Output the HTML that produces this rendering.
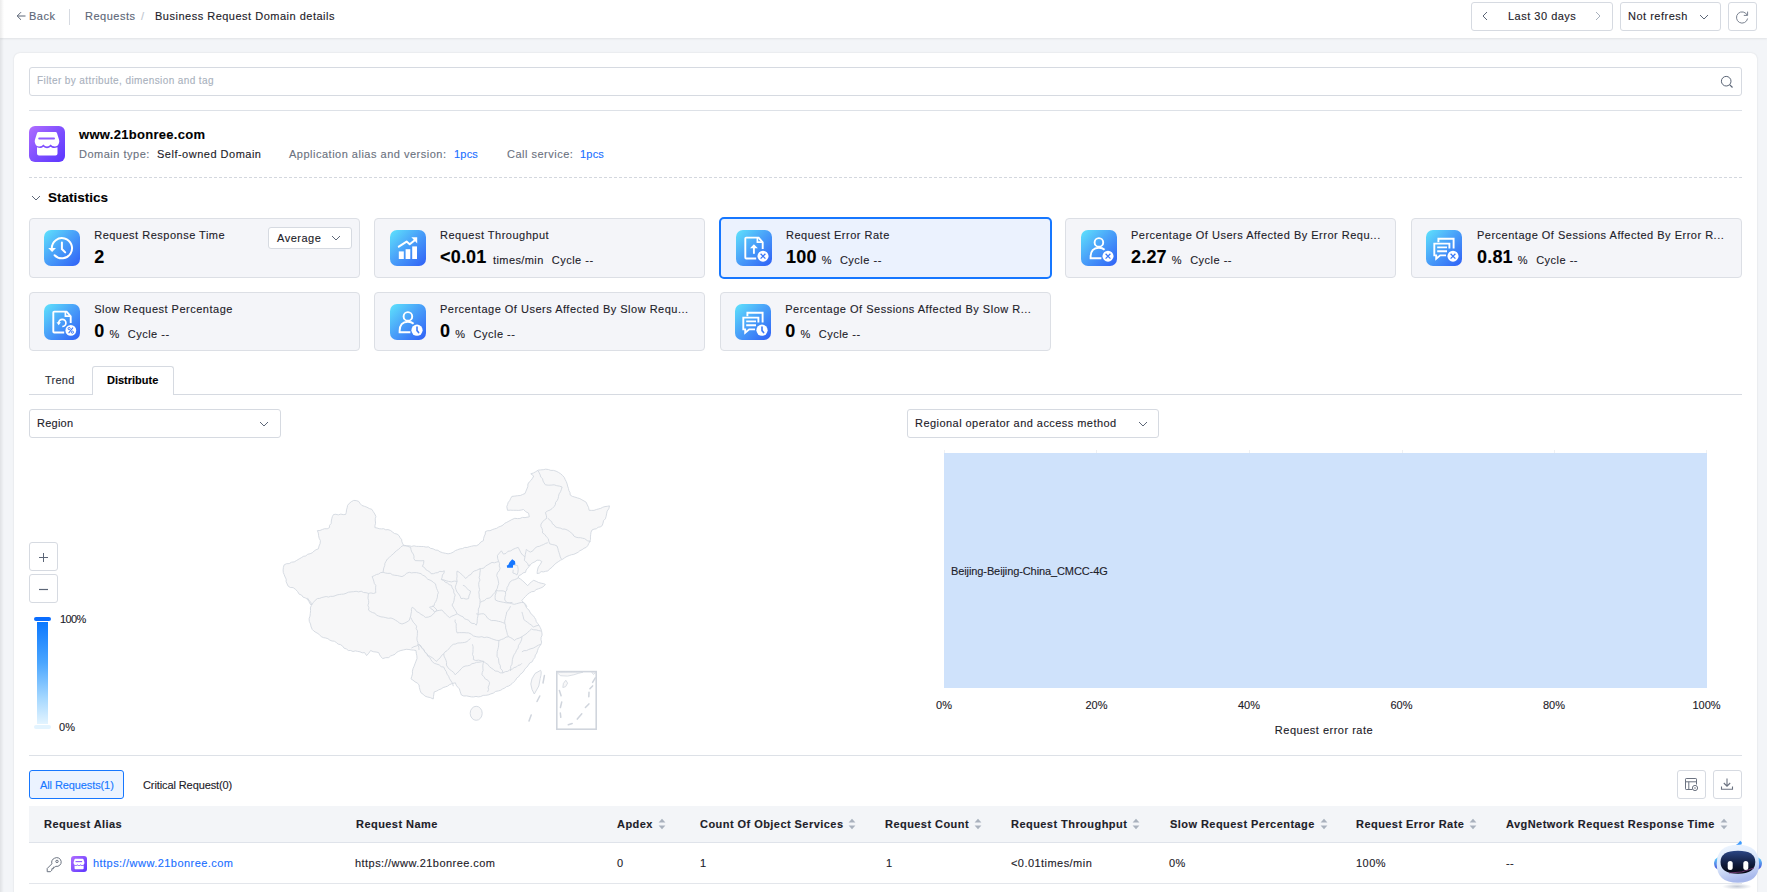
<!DOCTYPE html>
<html><head><meta charset="utf-8">
<style>
*{box-sizing:border-box;margin:0;padding:0}
html,body{width:1767px;height:892px;overflow:hidden}
body{background:#f3f5f8;font-family:"Liberation Sans",sans-serif;font-size:11px;color:#1d2129;position:relative}
.a{position:absolute}
.t{position:absolute;white-space:nowrap;line-height:1;letter-spacing:.5px;-webkit-text-stroke:.12px currentColor}
.vrow,.th{-webkit-text-stroke:.12px currentColor}
.hdr{left:0;top:0;width:1767px;height:38px;background:#fff;box-shadow:0 1px 2px rgba(0,0,0,.08)}
.lsh{left:0;top:0;width:4px;height:892px;background:linear-gradient(to right,rgba(0,0,0,.08),rgba(0,0,0,0));z-index:50}
.box{position:absolute;border:1px solid #d6dae1;border-radius:3px;background:#fff}
.card{left:14px;top:53px;width:1743px;height:900px;background:#fff;border-radius:6px;box-shadow:0 0 2px rgba(0,0,0,.12)}
.sc{position:absolute;width:331px;height:59px;background:#f4f5f9;border:1px solid #dcdfe5;border-radius:4px}
.sc.sel{background:#ebf2fe;border:2px solid #1677ff;width:333px;border-radius:5px}
.ic{position:absolute;left:14px;top:11px;width:36px;height:36px;border-radius:7px;background:linear-gradient(135deg,#5fe3fc 0%,#4aa3f9 45%,#2f5ff6 100%)}
.ic svg{position:absolute;left:0;top:0}
.st{left:64.2px;top:11px;color:#1d2129}
.o1 .ic{left:15px}.o5 .ic{left:14px}.o1 .st,.o1 .vrow{left:65px}
.vrow{position:absolute;left:64.2px;top:29px;white-space:nowrap;line-height:1}
.sv{font-size:18px;font-weight:bold;color:#000;letter-spacing:.2px}
.su{font-size:11px;color:#1d2129;letter-spacing:.5px;position:relative;top:.6px}
.chev{position:absolute}
.th{font-weight:bold;color:#1d2129;letter-spacing:.45px}
</style></head><body>

<svg width="0" height="0" style="position:absolute">
<defs>
  <g id="b-x"><circle cx="27" cy="26.2" r="5.5" fill="#fff"/><path d="M24.6 23.8L29.4 28.6M29.4 23.8L24.6 28.6" stroke="#3d7af8" stroke-width="1.3"/></g>
  <g id="b-clk"><circle cx="27" cy="26.2" r="5.6" fill="#fff"/><path d="M27 23V26.6L28.6 28.6" fill="none" stroke="#3d7af8" stroke-width="1.6" stroke-linecap="round"/></g>
  <g id="b-pct"><circle cx="26.8" cy="26.4" r="5.4" fill="#fff"/><path d="M29 23.6L24.6 29.2" stroke="#3d7af8" stroke-width="1.1"/><circle cx="25.2" cy="24.6" r="1.1" fill="none" stroke="#3d7af8" stroke-width="1"/><circle cx="28.4" cy="28.2" r="1.1" fill="none" stroke="#3d7af8" stroke-width="1"/></g>
  <g id="i-hist" fill="none" stroke="#fff" stroke-width="2" stroke-linecap="round"><path d="M7.8 18.2A10.1 10.1 0 1 1 10.6 25.2"/><path d="M17.9 12.6V19L21.2 22.4"/><path d="M4.2 17.9H12L8.1 22Z" fill="#fff" stroke="none"/></g>
  <g id="i-chart" fill="#fff"><rect x="8.8" y="21.4" width="5" height="7.6"/><rect x="15.6" y="19.2" width="4.7" height="9.8"/><rect x="22.2" y="16.4" width="4.8" height="12.6"/><path d="M8.8 16.6L16.6 11.6L19.7 14.2L26 9.2" fill="none" stroke="#fff" stroke-width="2" stroke-linecap="round" stroke-linejoin="round"/><path d="M21.4 7.3H27.2V13.4Z" /></g>
  <g id="i-doc" fill="none" stroke="#fff" stroke-width="1.9"><path d="M20.2 28.5H10.2Q9.3 28.5 9.3 27.6V8.5Q9.3 7.6 10.2 7.6H22.6L26.7 12.3V18.9"/><path d="M21.4 7.8V12.2H26.4" stroke-width="1.7"/></g>
  <g id="i-user" fill="none" stroke="#fff" stroke-width="1.9"><circle cx="17.9" cy="12.4" r="4.3"/><path d="M23.6 19.8Q21.4 17.8 17.9 17.8Q9.6 17.8 9.6 27V28.2H20.4"/></g>
  <g id="i-chat" fill="none" stroke="#fff" stroke-width="1.9"><path d="M12.4 12.2V8.8H27.6V18.6"/><path d="M20 25.4H14.2L10.2 28.8V25.4H8.3V13.6H23.4V18.6"/><path d="M11.2 17.4H21M11.2 21.2H21"/></g>
</defs></svg>
<div class="a lsh"></div>
<div class="a hdr">
  <svg class="a" style="left:16px;top:11px" width="10" height="10" viewBox="0 0 10 10"><path d="M9.5 5H1.2M5 1.2L1.2 5L5 8.8" fill="none" stroke="#5c6677" stroke-width="1"/></svg>
  <div class="t" style="left:29px;top:11px;color:#5c6677">Back</div>
  <div class="a" style="left:69px;top:9px;width:1px;height:16px;background:#d6dae1"></div>
  <div class="t" style="left:85px;top:11px;color:#5c6677">Requests</div>
  <div class="t" style="left:141px;top:11px;color:#c0c6d0">/</div>
  <div class="t" style="left:155px;top:11px;color:#1d2129">Business Request Domain details</div>
  <div class="box" style="left:1471px;top:2px;width:142px;height:29px"></div>
  <svg class="a" style="left:1481px;top:11px" width="8" height="10" viewBox="0 0 8 10"><path d="M6 1L2 5l4 4" fill="none" stroke="#5c6677" stroke-width="1"/></svg>
  <div class="t" style="left:1508px;top:11px">Last 30 days</div>
  <svg class="a" style="left:1594px;top:11px" width="8" height="10" viewBox="0 0 8 10"><path d="M2 1l4 4-4 4" fill="none" stroke="#a9b1bd" stroke-width="1"/></svg>
  <div class="box" style="left:1620px;top:2px;width:101px;height:29px"></div>
  <div class="t" style="left:1628px;top:11px">Not refresh</div>
  <svg class="a" style="left:1699px;top:13px" width="10" height="8" viewBox="0 0 10 8"><path d="M1 2l4 4 4-4" fill="none" stroke="#5c6677" stroke-width="1"/></svg>
  <div class="box" style="left:1728px;top:2px;width:29px;height:29px"></div>
  <svg class="a" style="left:1734px;top:9px" width="16" height="16" viewBox="0 0 16 16"><path d="M13.2 6.2A5.6 5.6 0 1 0 13.6 9.5" fill="none" stroke="#7a8290" stroke-width="1"/><path d="M13.6 2.6V6.4H9.8" fill="none" stroke="#7a8290" stroke-width="1"/></svg>
</div>
<div class="a card"></div>

<!-- search -->
<div class="box" style="left:29px;top:67px;width:1713px;height:29px"></div>
<div class="t" style="left:37px;top:76px;font-size:10px;letter-spacing:.4px;color:#a9b1bd">Filter by attribute, dimension and tag</div>
<svg class="a" style="left:1720px;top:74.5px" width="14" height="14" viewBox="0 0 14 14"><circle cx="6.2" cy="6.2" r="4.8" fill="none" stroke="#5c6677" stroke-width="1"/><path d="M9.6 9.6L12.5 12.5" stroke="#5c6677" stroke-width="1.2"/></svg>
<div class="a" style="left:29px;top:110px;width:1713px;height:1px;background:#dde1e7"></div>

<!-- domain info -->
<div class="a" style="left:29px;top:126px;width:36px;height:36px;border-radius:6px;background:linear-gradient(135deg,#b06dff 0%,#7b4dff 55%,#5b35ff 100%)">
  <svg class="a" style="left:0;top:0" width="36" height="36" viewBox="0 0 36 36">
    <path d="M9.5 6H26.5Q27.6 6 28 7.2L30 13.5Q30.6 15.2 30 17Q29 20.5 25.8 20.5Q23 20.5 21.6 18.6Q20.2 20.5 18 20.5Q15.8 20.5 14.4 18.6Q13 20.5 10.2 20.5Q7 20.5 6 17Q5.4 15.2 6 13.5L8 7.2Q8.4 6 9.5 6Z" fill="#fff"/>
    <path d="M10.2 12.6H25" stroke="#8f5cff" stroke-width="2" stroke-linecap="round"/>
    <path d="M8 21.3Q10.5 22.6 12.8 21.8L14.4 20.8L16 21.8Q18 22.6 20 21.8L21.6 20.8L23.2 21.8Q25.6 22.6 28.5 21.3V27.6Q28.5 29.6 26.5 29.6H10Q8 29.6 8 27.6Z" fill="#fff"/>
  </svg>
</div>
<div class="t" style="left:79px;top:128px;font-size:13px;font-weight:bold;color:#000;letter-spacing:.3px">www.21bonree.com</div>
<div class="t" style="left:79px;top:149px;color:#6b7280">Domain type:</div>
<div class="t" style="left:157px;top:149px;color:#1d2129">Self-owned Domain</div>
<div class="t" style="left:289px;top:149px;color:#6b7280">Application alias and version:</div>
<div class="t" style="left:454px;top:149px;color:#1a6fff;letter-spacing:.2px">1pcs</div>
<div class="t" style="left:507px;top:149px;color:#6b7280">Call service:</div>
<div class="t" style="left:580px;top:149px;color:#1a6fff;letter-spacing:.2px">1pcs</div>
<div class="a" style="left:29px;top:177px;width:1713px;height:0;border-top:1px dashed #d3d7de"></div>

<!-- statistics -->
<svg class="a" style="left:31px;top:194px" width="10" height="8" viewBox="0 0 10 8"><path d="M1 2l4 4 4-4" fill="none" stroke="#5c6677" stroke-width="1"/></svg>
<div class="t" style="left:48px;top:191px;font-size:13.5px;font-weight:bold;color:#000;letter-spacing:0">Statistics</div>

<div class="sc" style="left:29px;top:218px;height:60px">
  <div class="ic"><svg width="36" height="36" viewBox="0 0 36 36"><use href="#i-hist"/></svg></div>
  <div class="t st">Request Response Time</div>
  <div class="vrow"><span class="sv">2</span></div>
  <div class="box" style="left:238px;top:8px;width:84px;height:22px"></div>
  <div class="t" style="left:247px;top:14px">Average</div>
  <svg class="a" style="left:301px;top:15px" width="10" height="8" viewBox="0 0 10 8"><path d="M1 2l4 4 4-4" fill="none" stroke="#5c6677" stroke-width="1"/></svg>
</div>
<div class="sc o1" style="left:374px;top:218px;height:60px">
  <div class="ic"><svg width="36" height="36" viewBox="0 0 36 36"><use href="#i-chart"/></svg></div>
  <div class="t st">Request Throughput</div>
  <div class="vrow"><span class="sv">&lt;0.01</span><span class="su" style="margin-left:6.5px;letter-spacing:.4px">times/min</span><span class="su" style="margin-left:8px">Cycle --</span></div>
</div>
<div class="sc sel o1" style="left:719px;top:217px;height:62px">
  <div class="ic"><svg width="36" height="36" viewBox="0 0 36 36"><use href="#i-doc"/><path d="M17.9 23.8V15.8" stroke="#fff" stroke-width="1.9"/><path d="M14 18.2L17.9 14.2L21.8 18.2Z" fill="#fff"/><use href="#b-x"/></svg></div>
  <div class="t st">Request Error Rate</div>
  <div class="vrow"><span class="sv">100</span><span class="su" style="margin-left:5px">%</span><span class="su" style="margin-left:8px">Cycle --</span></div>
</div>
<div class="sc o1" style="left:1065px;top:218px;height:60px">
  <div class="ic"><svg width="36" height="36" viewBox="0 0 36 36"><use href="#i-user"/><use href="#b-x"/></svg></div>
  <div class="t st">Percentage Of Users Affected By Error Requ...</div>
  <div class="vrow"><span class="sv">2.27</span><span class="su" style="margin-left:5px">%</span><span class="su" style="margin-left:8px">Cycle --</span></div>
</div>
<div class="sc o1 o5" style="left:1411px;top:218px;height:60px">
  <div class="ic"><svg width="36" height="36" viewBox="0 0 36 36"><use href="#i-chat"/><use href="#b-x"/></svg></div>
  <div class="t st">Percentage Of Sessions Affected By Error R...</div>
  <div class="vrow"><span class="sv">0.81</span><span class="su" style="margin-left:5px">%</span><span class="su" style="margin-left:8px">Cycle --</span></div>
</div>
<div class="sc" style="left:29px;top:292px;height:59px">
  <div class="ic"><svg width="36" height="36" viewBox="0 0 36 36"><use href="#i-doc"/><path d="M14.7 18.9A3.6 3.6 0 1 1 18.3 22.5" fill="none" stroke="#fff" stroke-width="1.7"/><path d="M12.5 18.3H16.9L14.7 21.2Z" fill="#fff"/><use href="#b-pct"/></svg></div>
  <div class="t st">Slow Request Percentage</div>
  <div class="vrow"><span class="sv">0</span><span class="su" style="margin-left:5px">%</span><span class="su" style="margin-left:8px">Cycle --</span></div>
</div>
<div class="sc o1" style="left:374px;top:292px;height:59px">
  <div class="ic"><svg width="36" height="36" viewBox="0 0 36 36"><use href="#i-user"/><use href="#b-clk"/></svg></div>
  <div class="t st">Percentage Of Users Affected By Slow Requ...</div>
  <div class="vrow"><span class="sv">0</span><span class="su" style="margin-left:5px">%</span><span class="su" style="margin-left:8px">Cycle --</span></div>
</div>
<div class="sc" style="left:720px;top:292px;height:59px">
  <div class="ic"><svg width="36" height="36" viewBox="0 0 36 36"><use href="#i-chat"/><use href="#b-clk"/></svg></div>
  <div class="t st">Percentage Of Sessions Affected By Slow R...</div>
  <div class="vrow"><span class="sv">0</span><span class="su" style="margin-left:5px">%</span><span class="su" style="margin-left:8px">Cycle --</span></div>
</div>

<!-- tabs -->
<div class="a" style="left:29px;top:394px;width:1713px;height:1px;background:#d6dae1"></div>
<div class="a" style="left:92px;top:366px;width:82px;height:29px;background:#fff;border:1px solid #d6dae1;border-bottom:none;border-radius:3px 3px 0 0"></div>
<div class="t" style="left:45px;top:375px;color:#2b313b;letter-spacing:.25px">Trend</div>
<div class="t" style="left:107px;top:375px;font-weight:bold;color:#000;letter-spacing:0">Distribute</div>

<!-- selects -->
<div class="box" style="left:29px;top:409px;width:252px;height:29px"></div>
<div class="t" style="left:37px;top:418px;letter-spacing:.25px">Region</div>
<svg class="a" style="left:259px;top:420px" width="10" height="8" viewBox="0 0 10 8"><path d="M1 2l4 4 4-4" fill="none" stroke="#5c6677" stroke-width="1"/></svg>
<div class="box" style="left:907px;top:409px;width:252px;height:29px"></div>
<div class="t" style="left:915px;top:418px;letter-spacing:.45px">Regional operator and access method</div>
<svg class="a" style="left:1138px;top:420px" width="10" height="8" viewBox="0 0 10 8"><path d="M1 2l4 4 4-4" fill="none" stroke="#5c6677" stroke-width="1"/></svg>


<!-- map -->
<svg class="a" style="left:270px;top:460px" width="360" height="290" viewBox="270 460 360 290">
<g fill="#f7f7f8" stroke="#d3d8e0" stroke-width="0.9" stroke-linejoin="round">
<polygon points="283.1,570.0 283.4,567.4 284.1,564.9 286.5,563.7 289.2,563.6 291.5,562.2 294.2,561.9 296.7,560.4 299.2,558.9 301.3,557.7 303.3,556.4 305.8,555.9 307.7,554.3 310.1,553.7 312.3,552.8 314.1,551.0 316.1,549.7 318.4,548.8 319.0,546.1 320.1,543.5 320.4,540.7 319.2,538.3 318.6,535.7 318.3,533.1 317.4,530.6 319.9,530.5 322.3,529.5 324.6,528.7 327.2,528.8 329.5,527.6 329.6,525.3 331.2,523.4 331.3,521.0 331.8,518.7 332.4,516.5 333.5,514.5 335.9,514.3 338.3,514.9 340.8,514.1 343.2,514.6 345.6,514.5 346.3,512.3 346.5,509.9 347.2,507.7 347.6,505.4 349.3,503.3 351.3,501.7 353.7,500.4 356.3,500.6 358.7,501.4 360.1,503.5 361.8,505.4 364.4,506.3 366.9,507.2 369.3,508.5 371.9,509.4 373.3,511.7 374.8,514.0 375.9,516.5 375.3,518.7 375.3,520.9 375.6,523.2 375.0,525.4 374.9,527.6 377.1,528.0 379.2,528.7 381.4,528.9 383.7,528.7 385.7,529.8 388.0,529.6 390.4,530.4 392.5,532.0 394.5,533.5 397.1,534.1 399.1,535.7 400.1,537.7 401.6,539.5 401.9,541.8 402.8,543.9 404.1,545.8 406.6,545.9 409.2,545.8 411.6,546.4 414.0,545.8 416.4,546.4 418.8,546.4 421.2,546.5 423.6,546.5 426.0,547.1 428.4,546.8 430.5,548.3 433.1,548.8 435.3,550.0 437.9,550.3 440.0,551.8 442.6,552.7 445.4,553.3 448.1,553.8 450.7,553.3 453.1,552.2 455.3,550.6 457.7,549.7 460.2,548.8 462.5,548.6 464.7,547.4 467.1,547.5 469.3,546.7 471.6,546.2 473.9,545.7 476.3,545.8 478.9,544.4 480.8,542.0 483.4,540.7 483.6,538.4 484.3,536.1 485.3,534.0 485.4,531.6 487.6,530.7 490.0,530.7 492.2,529.7 494.4,528.9 496.7,528.3 498.7,527.0 500.9,526.2 503.0,525.1 504.7,523.3 506.8,522.3 508.9,521.2 511.8,519.6 514.8,518.3 517.4,518.6 519.9,518.5 522.4,517.4 525.0,517.6 529.3,516.8 528.6,513.2 525.8,511.7 523.5,509.5 521.1,510.1 518.7,510.4 516.2,510.3 513.3,510.3 510.4,510.2 507.5,510.3 506.8,506.6 507.6,504.4 508.3,502.3 509.8,500.4 510.7,498.4 511.9,496.4 514.8,496.1 517.7,495.7 520.3,495.5 522.6,494.5 525.0,493.5 525.9,491.2 526.9,488.9 527.8,486.6 527.9,484.0 529.3,481.9 531.2,480.2 532.5,478.2 533.7,476.0 530.8,473.8 533.4,473.0 535.8,471.7 538.1,470.2 540.6,469.9 543.2,469.7 545.7,469.2 548.3,469.5 550.8,470.4 553.5,470.4 556.1,471.2 558.5,472.4 560.7,473.8 562.6,475.5 564.3,477.5 565.2,479.6 566.3,481.7 567.1,483.9 567.6,486.1 568.4,488.3 568.9,490.6 570.0,492.6 570.2,495.0 572.4,496.4 574.9,497.1 577.4,497.9 579.8,498.6 581.9,499.8 584.1,501.0 586.2,502.3 587.3,504.9 588.6,507.5 589.1,510.3 591.6,510.4 594.0,510.4 596.4,509.5 598.6,508.9 600.8,508.3 602.8,507.2 605.0,506.6 607.3,506.3 609.5,505.9 608.8,508.7 607.2,511.1 606.6,513.9 606.1,516.4 605.4,518.8 603.5,520.7 603.0,523.2 602.2,525.6 600.3,526.9 598.1,527.3 596.3,528.8 594.0,529.1 592.0,530.0 591.0,532.2 590.7,534.6 590.4,536.9 590.5,539.3 589.8,541.6 588.7,543.6 587.7,545.7 586.2,547.4 584.0,548.3 582.1,549.7 579.9,550.7 578.1,552.3 576.0,553.3 573.9,554.3 571.6,554.7 569.3,555.5 567.0,556.4 564.9,557.6 562.9,559.1 560.5,560.2 558.3,561.7 556.1,563.2 554.1,564.9 552.2,567.1 549.9,568.9 547.8,570.9 545.6,571.3 543.4,571.9 541.1,571.6 539.4,573.1 537.1,573.6 537.3,571.3 537.7,569.1 538.4,566.9 540.3,564.3 541.8,561.5 539.6,560.3 537.1,560.2 534.9,561.8 532.3,562.9 530.3,564.9 527.7,568.2 526.1,570.0 525.6,572.3 523.1,572.9 521.2,574.6 518.9,575.6 518.2,577.7 520.7,579.2 522.9,581.0 525.0,583.0 527.7,585.7 529.5,583.6 531.5,581.8 533.7,580.3 536.2,581.3 538.6,582.5 541.1,583.2 543.8,583.7 545.4,584.5 542.9,587.0 540.7,588.0 538.4,588.8 536.1,589.6 534.2,591.4 531.7,591.7 529.5,592.9 527.3,594.5 525.5,596.5 523.6,598.4 521.9,600.5 523.2,602.4 524.8,604.1 525.7,606.2 526.9,608.3 528.9,609.9 530.0,612.1 531.3,614.2 533.3,615.7 534.5,617.5 535.7,619.4 536.3,621.7 537.6,623.4 539.0,625.2 540.3,627.6 541.4,630.2 541.9,632.9 542.1,635.2 541.1,637.4 541.0,639.7 541.6,642.1 541.0,644.3 539.6,646.3 538.3,648.4 537.5,650.7 536.8,653.1 535.4,655.1 534.8,657.5 533.3,659.5 532.2,661.8 529.7,663.0 528.4,665.1 526.9,667.1 525.0,668.8 523.8,671.0 522.1,673.0 520.0,674.6 518.6,676.8 516.7,678.1 515.6,680.2 513.9,681.8 512.3,683.4 510.5,684.8 508.6,686.1 506.4,686.7 504.6,688.1 502.5,689.0 500.6,690.3 498.4,690.9 495.7,691.4 493.4,693.1 490.8,693.9 488.3,694.9 485.8,695.3 483.2,695.4 480.7,696.5 478.2,696.9 476.0,696.4 473.7,696.9 471.5,696.9 469.0,696.4 466.5,695.9 463.8,696.0 461.4,695.0 460.3,692.0 459.4,688.9 457.7,687.1 456.2,685.2 455.4,682.8 452.2,683.5 449.3,684.8 447.5,686.2 445.3,686.9 443.1,687.6 441.2,688.9 438.8,689.8 436.6,691.1 434.2,691.9 433.8,694.3 433.5,696.6 433.2,699.0 430.3,697.6 427.1,696.9 424.8,696.0 423.1,694.2 421.1,692.9 420.1,690.3 419.4,687.6 419.0,684.8 417.2,683.0 415.0,681.8 413.0,680.2 411.0,678.8 411.8,676.3 412.5,673.8 412.4,671.2 413.0,668.7 414.1,666.2 415.0,663.7 416.0,661.1 417.0,658.6 416.9,655.9 416.3,653.2 416.0,650.5 413.7,650.1 411.3,649.9 409.0,649.5 406.2,649.3 403.6,649.9 400.9,650.5 398.7,651.3 396.6,652.4 395.0,654.3 392.8,655.2 390.5,656.0 388.8,657.6 385.7,657.7 382.7,658.6 381.0,656.8 379.7,654.9 378.7,652.6 376.0,652.0 373.2,651.7 370.6,650.5 368.8,653.2 366.6,655.6 364.6,652.6 362.2,652.8 360.0,651.8 357.7,651.4 355.4,650.9 353.0,651.5 350.7,650.5 348.4,650.5 346.5,649.0 344.1,648.2 342.6,646.1 340.6,644.7 338.1,644.1 336.3,642.5 334.3,641.2 332.0,641.0 329.8,640.1 327.9,638.7 325.7,638.0 323.4,637.6 321.3,636.6 319.7,635.0 317.9,633.5 315.9,632.4 313.9,631.1 312.3,629.5 311.1,626.9 310.5,624.0 309.3,621.4 309.1,618.7 310.0,616.1 310.3,613.4 310.6,610.7 310.4,607.9 311.3,605.3 309.8,603.4 308.8,601.2 307.3,599.2 305.3,597.9 303.0,597.1 301.5,595.0 299.2,594.2 297.5,591.4 295.2,589.1 293.1,587.6 290.3,587.5 288.1,586.1 287.1,583.9 286.1,581.7 286.2,579.2 285.1,577.0 284.2,574.7 283.3,572.5"/>
<ellipse cx="476.2" cy="713.3" rx="6" ry="7"/>
<path d="M540.6 670.3Q542 672 540.2 678.5L538.8 686L534.3 694Q531.5 690 530.8 684Q531 679 535 673.5Z"/>
</g>
<g fill="none" stroke="#d3d8e0" stroke-width="0.9" stroke-linejoin="round"><polyline points="404.9,545.3 407.8,546.3 410.7,547.5 411.0,549.8 411.8,552.0 413.2,554.0 414.0,556.1 413.9,558.6 415.1,560.6 418.0,560.7 421.0,560.8 423.9,560.6 423.6,563.6 422.4,566.4 424.5,567.5 425.7,569.5 427.7,570.7 429.7,571.8 431.1,573.7 433.4,573.7 435.5,572.9 437.8,572.6 439.8,571.3 442.2,571.7 444.3,570.8 444.0,573.1 442.4,575.0 442.1,577.3 441.3,579.5 443.8,579.9 446.2,580.8 448.6,581.4 451.4,581.9 454.3,581.1 457.1,581.4 456.7,578.8 457.1,576.2 456.8,573.6 457.1,571.0 459.1,572.2 460.8,573.7 462.6,575.2 464.2,576.8 465.7,578.6 467.3,576.9 469.0,575.4 471.1,574.3 472.4,572.3 474.3,571.0 476.7,570.3 478.9,569.2 481.4,568.6 483.8,568.1 485.5,566.1 487.8,564.8 490.0,563.5 492.0,562.4 494.4,562.8 496.5,562.1 498.7,561.5 497.7,558.6 497.4,555.5 499.4,553.1 501.4,550.8 503.4,554.1 506.0,553.4 507.9,551.3 510.7,550.9 512.9,549.4 515.5,548.3 518.2,547.4 519.6,550.1 520.9,552.8 522.7,555.1 525.0,556.8 525.3,554.3 525.9,551.9 526.3,549.4 528.2,550.9 530.3,552.1 532.9,550.8 534.7,548.4 537.1,546.7 539.4,546.3 541.5,545.3 543.6,544.5 545.6,543.4 547.8,542.7"/><polyline points="307.3,597.8 308.9,600.1 310.7,602.3 311.7,605.0 313.3,602.5 315.2,600.3 317.5,598.5 319.7,598.4 321.8,597.5 324.0,597.0 326.2,596.5 328.5,597.1 330.6,596.3 332.9,596.4 335.0,595.8 337.1,594.9 339.3,594.5 341.5,594.2 343.7,594.1 346.1,593.3 348.4,592.2 351.0,591.9 353.5,591.7 356.1,591.3 358.7,591.9 361.2,591.2 363.5,592.5 366.1,592.7 368.5,593.4 370.9,592.9 373.4,593.5 375.8,592.7"/><polyline points="375.8,592.7 375.6,590.3 375.6,587.8 375.8,585.4 374.3,583.4 373.8,581.1 373.0,578.8 372.1,576.6 374.3,575.7 376.4,574.5 378.7,574.0 380.7,572.6 383.1,572.3 383.4,570.0 383.8,567.8 384.7,565.7 384.9,563.4 386.0,561.3 387.4,559.0 389.4,557.4 391.2,555.5 393.3,553.9 395.0,552.0 396.8,550.5 398.7,549.2 400.4,547.6 402.0,546.0 404.9,545.3"/><polyline points="368.5,593.4 368.2,595.8 368.0,598.2 368.6,600.6 368.7,602.9 367.9,605.3 368.9,607.7 368.5,610.1 370.4,611.5 372.5,612.6 374.9,613.2 376.5,615.2 378.7,616.0 381.0,616.9 383.5,617.1 385.9,617.7 388.4,618.3 391.0,618.0 393.3,618.9 395.5,620.2 397.6,621.5 399.6,623.1 402.0,624.0 404.6,623.1 407.0,621.9 409.3,620.3 409.9,618.1 410.7,616.0 411.0,613.8 411.5,611.6 411.4,609.3 412.2,607.2 414.8,609.0 416.6,611.6 419.0,612.7 421.0,614.4 423.4,615.6 425.3,617.4 428.3,617.1 431.1,616.0 433.1,614.1 435.1,612.2 437.0,610.1 434.9,607.8 432.6,605.8"/><polyline points="383.1,572.3 385.4,573.0 387.8,573.4 390.3,573.3 392.5,574.8 394.8,575.3 397.3,575.5 399.6,576.1 402.0,576.6 404.5,575.3 406.6,573.3 409.3,572.3 411.6,572.9 414.0,572.6 416.4,572.6 418.7,573.1 421.0,573.7 422.7,575.2 424.8,576.0 426.3,577.8 427.9,579.3 430.1,580.1 432.0,581.2 433.7,582.6 435.5,583.9 436.0,586.2 436.6,588.4 437.5,590.5 438.4,592.7 437.5,594.8 437.4,597.2 436.7,599.4 435.8,601.5 434.5,603.5 434.1,605.8 431.9,606.7 429.5,607.1 431.0,608.8 433.1,609.9 434.3,611.9 436.7,610.8 439.3,610.4 441.9,610.0 443.7,612.0 445.5,614.0 447.5,615.8 449.5,617.6 451.9,616.1 454.6,615.1 457.1,613.8 459.0,614.9 461.0,616.0 463.1,616.8 464.5,618.8 466.7,619.5 468.8,620.3 470.2,622.3 472.1,623.4 474.6,623.6 476.2,625.2"/><polyline points="457.1,581.4 456.2,584.3 455.2,587.1 456.0,589.6 457.0,592.0 458.7,594.0 460.1,596.2 461.0,598.6 463.5,598.3 466.1,599.1 468.6,598.6 468.9,596.0 470.0,593.6 470.5,591.0 468.3,589.9 466.7,588.1 465.1,586.2 462.9,585.2"/><polyline points="441.3,579.5 443.6,580.3 445.2,582.2 447.4,583.0 449.2,584.6 451.5,585.4 452.2,587.9 453.7,590.1 453.8,592.8 455.2,595.0 454.4,597.5 454.1,600.2 453.4,602.7 452.0,605.0 453.3,607.2 454.6,609.4 456.0,611.5 457.1,613.8"/><polyline points="480.0,568.1 480.3,570.5 479.9,572.9 479.8,575.2 479.1,577.6 480.0,580.0 478.9,582.3 478.7,584.7 479.0,587.1 479.6,589.6 478.8,592.2 479.2,594.8 479.2,597.3 480.1,599.8 480.0,602.4 479.8,604.7 479.4,607.0 478.3,609.1 478.4,611.5 478.1,613.8 477.9,616.1 477.4,618.4 477.2,620.7 477.1,623.0 476.2,625.2"/><polyline points="498.7,561.5 499.6,563.6 499.2,566.0 500.1,568.2 499.2,570.8 497.4,572.9 496.7,575.6 497.7,578.2 498.3,580.9 498.7,583.7 497.8,585.9 497.3,588.3 496.1,590.4 496.1,592.8 495.2,595.2 495.1,597.6 495.4,600.0 498.1,601.2 501.0,601.8 503.8,602.4 506.7,602.9 509.5,602.9 512.4,602.4"/><polyline points="480.0,602.4 482.3,601.3 484.7,600.4 486.6,598.5 489.2,598.1 491.4,596.7 492.9,594.6 494.8,592.7 496.1,590.4 498.4,590.9 500.8,590.8 503.2,590.9 505.5,591.8 506.9,590.0 507.0,587.6 508.3,585.7 509.1,583.6 510.2,581.7 512.3,580.3 514.7,579.6 517.0,578.7 518.9,577.0"/><polyline points="505.5,591.8 505.6,594.6 504.8,597.3 504.8,600.0 506.7,602.4 509.3,602.8 511.7,603.7 514.3,604.3 516.7,603.7 519.0,603.0 521.3,602.5 523.8,602.4 525.7,604.5 527.0,607.0"/><polyline points="476.2,613.8 478.7,614.3 481.3,613.8 483.8,613.8 485.9,615.5 487.3,617.9 489.5,619.5 491.5,620.6 493.9,620.5 496.2,620.7 498.3,621.3 500.5,621.7 502.7,622.6 504.8,623.3 504.7,620.9 505.3,618.7 505.7,616.4 506.4,614.2 506.7,611.9 508.4,610.3 509.5,608.3 510.5,606.2"/><polyline points="521.9,611.9 522.6,614.4 523.3,616.9 523.8,619.5 525.7,621.0 527.7,622.4 529.6,623.9 531.7,625.2 533.3,627.1 536.1,625.9 539.0,625.2"/><polyline points="455.2,619.5 455.0,621.8 456.3,623.9 456.1,626.2 456.3,628.5 456.4,630.7 457.1,632.9 459.4,632.6 461.7,632.6 464.0,632.6 466.3,632.8 468.6,632.9 471.2,634.1 473.4,635.9 476.2,636.7 479.0,637.1 481.9,636.7 484.2,637.6 486.8,637.1 489.1,637.6 491.4,638.6 493.9,639.5 496.4,640.3 499.0,640.5 501.4,639.5 503.8,638.7 506.0,637.1 508.6,636.7"/><polyline points="504.8,623.3 505.6,625.5 505.6,627.9 506.3,630.1 506.9,632.3 507.4,634.6 508.6,636.7 510.7,637.7 512.7,638.8 514.3,640.5 516.6,638.9 519.4,638.0 521.9,636.7 523.9,635.3 526.0,634.0 527.8,632.3 529.6,630.7 531.4,629.0 533.7,629.8 536.2,629.9 538.6,630.6 541.0,631.0"/><polyline points="419.0,644.3 421.0,645.9 421.8,648.3 423.9,649.8 424.8,652.2 426.7,653.8 428.5,655.5 430.6,656.7 432.7,658.0 434.5,659.6 436.2,661.4 438.2,659.6 440.2,657.8 441.6,655.4 443.8,653.8 445.0,651.9 447.0,650.7 448.6,649.1 450.0,647.4 451.5,645.6 453.3,644.3 455.6,644.0 457.8,643.0 460.2,642.9 462.5,642.7 464.8,642.4 467.0,641.6 468.7,640.0 470.5,638.6"/><polyline points="443.8,653.8 444.0,656.1 445.1,658.2 446.0,660.4 446.6,662.6 446.4,665.0 447.6,667.1 449.3,669.2 451.6,670.8 453.7,672.5 455.2,674.8 457.1,672.9 459.2,671.1 460.9,669.0 462.9,667.1 465.1,666.1 467.5,665.8 469.9,665.3 471.9,663.7 474.3,663.3 476.6,662.3 479.0,662.2 481.4,661.8 483.8,661.4 485.6,663.2 487.8,664.3 489.3,666.5 491.2,668.0 493.3,669.4 495.2,671.0 497.9,671.3 500.2,672.8 502.9,672.9 505.2,671.7 507.8,671.3 509.9,669.7 512.4,669.0 514.1,667.6 516.4,667.0 518.0,665.4 520.3,664.9 521.9,663.3"/><polyline points="499.0,640.5 498.7,642.7 498.7,645.0 498.4,647.2 497.8,649.4 497.2,651.6 497.1,653.8 497.0,656.3 498.5,658.5 498.7,660.9 499.0,663.3 500.3,665.6 500.4,668.3 502.3,670.3 502.9,672.9"/><polyline points="521.9,636.7 521.7,639.2 520.9,641.4 519.7,643.6 518.4,645.7 518.1,648.1 516.5,650.2 515.6,652.5 514.1,654.7 513.1,657.0 512.4,659.5 512.2,661.8 512.0,664.2 510.7,666.3 510.6,668.7 510.5,671.0"/><polyline points="521.9,651.9 524.0,650.6 526.5,650.6 528.7,649.5 531.0,648.7 533.3,648.1 535.8,646.7 538.3,645.2 541.0,644.3"/><polyline points="472.4,644.3 473.1,646.8 473.0,649.4 473.0,651.9 472.5,654.5 473.6,656.9 473.3,659.5 475.8,660.5 478.6,660.1 481.2,660.8 483.8,661.4 483.1,663.6 482.8,665.8 482.9,668.1 483.1,670.4 482.2,672.6 481.9,674.8 483.9,676.6 485.3,679.0 487.9,680.2 489.5,682.4 489.2,684.8 488.1,687.1 488.6,689.6 487.6,691.9"/><polyline points="411.4,648.1 413.9,646.7 416.6,645.9 419.0,644.3 420.2,646.4 422.3,647.8 423.8,649.7 424.8,651.9 426.8,653.5 427.6,656.0 429.8,657.4 430.9,659.7 432.3,661.7 434.3,663.3 436.7,664.1 439.2,664.9 441.2,666.7 443.8,667.1 444.8,669.5 446.3,671.6 447.0,674.1 448.6,676.2 449.5,678.6 451.0,681.0 452.6,683.4 453.3,686.2"/><polyline points="410.7,617.4 411.9,619.8 413.2,622.1 415.0,624.1 416.6,626.2 416.2,628.6 417.5,630.9 417.4,633.3 417.3,635.6 416.9,638.1 417.1,640.4 418.0,642.7 418.0,645.1 418.8,647.5 419.0,650.0"/><polyline points="538.1,470.9 539.2,472.8 540.2,474.9 540.8,477.1 542.6,478.7 543.0,481.0 544.1,482.9 545.4,484.8 548.3,485.2 551.2,485.1 554.1,484.8 556.7,485.7 559.5,486.1 562.1,487.0 561.4,489.4 560.5,491.8 559.1,493.9 558.5,496.4 558.1,498.6 557.1,500.6 555.6,502.4 555.3,504.7 554.1,506.6 552.2,508.5 550.1,510.0 547.5,511.0 545.4,512.5 546.3,515.4 546.8,518.3 544.5,519.8 542.6,521.8 541.0,524.1 540.8,526.4 542.0,528.5 542.6,530.6 542.5,532.9 544.8,534.5 546.4,536.8 548.3,538.7 548.8,541.3 549.7,543.8 552.2,544.5 554.7,545.0 557.0,546.0 557.8,548.2 558.3,550.4 559.0,552.6 559.7,554.8 560.3,557.0 561.4,559.1"/><polyline points="548.3,518.3 549.6,520.2 551.6,521.5 552.4,523.8 554.3,525.1 555.6,527.0 557.9,527.7 560.3,528.1 562.5,529.1 565.0,529.1 567.2,530.0 569.2,531.2 570.9,532.6 572.7,534.0 573.9,536.1 576.0,537.2 578.2,537.7 580.4,537.7 582.5,538.2 584.7,538.7 587.4,540.7 590.6,541.6"/><polyline points="525.0,556.8 524.3,560.2 526.0,561.9 527.7,563.5 528.3,565.6 530.3,564.9"/><polyline points="513.5,564.9 517.6,565.6 518.2,569.6 517.9,572.4 516.9,575.0 515.1,573.7 512.9,573.0 513.2,569.6"/></g>
<path d="M506.8 565.6L507.1 567.8L512.9 567.8L513.2 564.9L515.4 564.5L515 561.3L512.2 559.3L509.5 562.2L508.2 564.9Z" fill="#1677ff"/>
<rect x="556.8" y="671.6" width="39.4" height="57.6" fill="none" stroke="#d0d5dd" stroke-width="1.6"/>
<path d="M557 672.4L560.3 675.7L567.5 676.1L573.8 674.8L578.2 673.4L583 672.2Z" fill="#f7f7f8" stroke="#d3d8e0" stroke-width="0.8"/>
<path d="M591.7 672.2L596 672.2L593.5 674.5Z" fill="#f7f7f8" stroke="#d3d8e0" stroke-width="0.8"/>
<g stroke="#d0d5dd" stroke-width="1.5" stroke-linecap="round" fill="none">
<path d="M544.4 675.6L543 683M539.8 696L537 701.5M531.2 715L529 721"/>
<path d="M559.4 690.5L561.1 695.8M561.7 702.1L560.4 707.5M560.3 712.9L560.8 717.3M568.3 724.8L572.2 723.5M577.3 719.1L581.8 713.8M585.4 707.5L588.9 703.9M589 692.3L588.8 696.7M589.9 688.7L592.6 685.9M592.6 682.4L595.3 677.9"/>
<path d="M565.5 680.5Q562.5 683 562.8 687.5Q566 688 567.5 683.5Z" stroke-width="0.8" fill="#f7f7f8"/>
</g>
</svg>
<!-- map controls -->
<div class="box" style="left:29px;top:542px;width:29px;height:29px"></div>
<svg class="a" style="left:38px;top:552px" width="11" height="11" viewBox="0 0 11 11"><path d="M1 5.5H10M5.5 1V10" stroke="#5c6677" stroke-width="1"/></svg>
<div class="box" style="left:29px;top:574px;width:29px;height:29px"></div>
<svg class="a" style="left:38px;top:584px" width="11" height="11" viewBox="0 0 11 11"><path d="M1 5.5H10" stroke="#5c6677" stroke-width="1.2"/></svg>

<!-- legend -->
<div class="a" style="left:34px;top:617px;width:17px;height:4px;border-radius:2px;background:#0a6dff"></div>
<div class="a" style="left:37px;top:622px;width:11px;height:102px;background:linear-gradient(to bottom,#0b78ff,#4aa6ff 40%,#a6d8ff 75%,#e3f4ff)"></div>
<div class="a" style="left:34px;top:725px;width:17px;height:4px;border-radius:2px;background:#e3f4ff"></div>
<div class="t" style="left:60px;top:614px;letter-spacing:-.6px">100%</div>
<div class="t" style="left:59px;top:722px;letter-spacing:.1px">0%</div>

<!-- chart -->
<div class="a" style="left:944px;top:453px;width:763px;height:235px;background:#cfe2fb"></div>
<div class="t" style="left:951px;top:566px;letter-spacing:-.1px">Beijing-Beijing-China_CMCC-4G</div>
<div class="t" style="left:904.0px;top:700px;width:80px;text-align:center;letter-spacing:0">0%</div>
<div class="a" style="left:944px;top:450px;width:1px;height:3px;background:#eef0f3"></div>
<div class="t" style="left:1056.5px;top:700px;width:80px;text-align:center;letter-spacing:0">20%</div>
<div class="a" style="left:1096px;top:450px;width:1px;height:3px;background:#eef0f3"></div>
<div class="t" style="left:1209.0px;top:700px;width:80px;text-align:center;letter-spacing:0">40%</div>
<div class="a" style="left:1249px;top:450px;width:1px;height:3px;background:#eef0f3"></div>
<div class="t" style="left:1361.5px;top:700px;width:80px;text-align:center;letter-spacing:0">60%</div>
<div class="a" style="left:1402px;top:450px;width:1px;height:3px;background:#eef0f3"></div>
<div class="t" style="left:1514.0px;top:700px;width:80px;text-align:center;letter-spacing:0">80%</div>
<div class="a" style="left:1554px;top:450px;width:1px;height:3px;background:#eef0f3"></div>
<div class="t" style="left:1666.5px;top:700px;width:80px;text-align:center;letter-spacing:0">100%</div>
<div class="a" style="left:1706px;top:450px;width:1px;height:3px;background:#eef0f3"></div>
<div class="t" style="left:1224px;top:725px;width:200px;text-align:center;letter-spacing:.5px">Request error rate</div>

<div class="a" style="left:29px;top:755px;width:1713px;height:1px;background:#dde1e7"></div>

<!-- table tabs -->
<div class="a" style="left:29px;top:770px;width:95px;height:29px;border:1px solid #1677ff;border-radius:3px;background:#ebf3ff"></div>
<div class="t" style="left:40px;top:780px;color:#1677ff;letter-spacing:-.1px">All Requests(1)</div>
<div class="t" style="left:143px;top:780px;letter-spacing:-.1px">Critical Request(0)</div>
<div class="box" style="left:1677px;top:770px;width:29px;height:29px"></div>
<svg class="a" style="left:1683px;top:776px" width="16" height="16" viewBox="0 0 16 16"><path d="M9.5 13.5H3.2Q2.5 13.5 2.5 12.8V3.2Q2.5 2.5 3.2 2.5H12.8Q13.5 2.5 13.5 3.2V8.5M2.5 5.8H13.5M5.8 5.8V13.5" fill="none" stroke="#6b7280" stroke-width="1"/><circle cx="12" cy="12" r="2.6" fill="#fff" stroke="#6b7280" stroke-width="1"/><circle cx="12" cy="12" r=".8" fill="#6b7280"/></svg>
<div class="box" style="left:1713px;top:770px;width:29px;height:29px"></div>
<svg class="a" style="left:1719px;top:776px" width="16" height="16" viewBox="0 0 16 16"><path d="M8 2.5V10M4.8 7L8 10.2L11.2 7M2.5 10.5V13.2H13.5V10.5" fill="none" stroke="#6b7280" stroke-width="1.1"/></svg>

<!-- table -->
<div class="a" style="left:29px;top:806px;width:1713px;height:37px;background:#f3f5f8;border-bottom:1px solid #dfe3ea"></div>
<div class="a" style="left:29px;top:883px;width:1713px;height:1px;background:#e3e6eb"></div>
<div class="t th" style="left:44px;top:819px">Request Alias</div>
<div class="t th" style="left:356px;top:819px">Request Name</div>
<div class="t th" style="left:617px;top:819px">Apdex<svg style="position:absolute;right:-13px;top:-1px" width="8" height="12" viewBox="0 0 8 12"><path d="M4 0.8L7.4 4.6H0.6Z" fill="#a9b1bd"/><path d="M4 11.2L7.4 7.4H0.6Z" fill="#a9b1bd"/></svg></div>
<div class="t th" style="left:700px;top:819px">Count Of Object Services<svg style="position:absolute;right:-13px;top:-1px" width="8" height="12" viewBox="0 0 8 12"><path d="M4 0.8L7.4 4.6H0.6Z" fill="#a9b1bd"/><path d="M4 11.2L7.4 7.4H0.6Z" fill="#a9b1bd"/></svg></div>
<div class="t th" style="left:885px;top:819px">Request Count<svg style="position:absolute;right:-13px;top:-1px" width="8" height="12" viewBox="0 0 8 12"><path d="M4 0.8L7.4 4.6H0.6Z" fill="#a9b1bd"/><path d="M4 11.2L7.4 7.4H0.6Z" fill="#a9b1bd"/></svg></div>
<div class="t th" style="left:1011px;top:819px">Request Throughput<svg style="position:absolute;right:-13px;top:-1px" width="8" height="12" viewBox="0 0 8 12"><path d="M4 0.8L7.4 4.6H0.6Z" fill="#a9b1bd"/><path d="M4 11.2L7.4 7.4H0.6Z" fill="#a9b1bd"/></svg></div>
<div class="t th" style="left:1170px;top:819px">Slow Request Percentage<svg style="position:absolute;right:-13px;top:-1px" width="8" height="12" viewBox="0 0 8 12"><path d="M4 0.8L7.4 4.6H0.6Z" fill="#a9b1bd"/><path d="M4 11.2L7.4 7.4H0.6Z" fill="#a9b1bd"/></svg></div>
<div class="t th" style="left:1356px;top:819px">Request Error Rate<svg style="position:absolute;right:-13px;top:-1px" width="8" height="12" viewBox="0 0 8 12"><path d="M4 0.8L7.4 4.6H0.6Z" fill="#a9b1bd"/><path d="M4 11.2L7.4 7.4H0.6Z" fill="#a9b1bd"/></svg></div>
<div class="t th" style="left:1506px;top:819px">AvgNetwork Request Response Time<svg style="position:absolute;right:-13px;top:-1px" width="8" height="12" viewBox="0 0 8 12"><path d="M4 0.8L7.4 4.6H0.6Z" fill="#a9b1bd"/><path d="M4 11.2L7.4 7.4H0.6Z" fill="#a9b1bd"/></svg></div>
<div class="t" style="left:355px;top:858px;letter-spacing:.45px">https://www.21bonree.com</div>
<div class="t" style="left:617px;top:858px;letter-spacing:.45px">0</div>
<div class="t" style="left:700px;top:858px;letter-spacing:.45px">1</div>
<div class="t" style="left:886px;top:858px;letter-spacing:.45px">1</div>
<div class="t" style="left:1011px;top:858px;letter-spacing:.45px">&lt;0.01times/min</div>
<div class="t" style="left:1169px;top:858px;letter-spacing:.45px">0%</div>
<div class="t" style="left:1356px;top:858px;letter-spacing:.45px">100%</div>
<div class="t" style="left:1506px;top:858px;letter-spacing:.45px">--</div>
<div class="t" style="left:93px;top:858px;color:#1a6fff;letter-spacing:.45px">https://www.21bonree.com</div>
<svg class="a" style="left:45px;top:856px" width="17" height="17" viewBox="0 0 17 17"><path d="M9.6 2.2A4.4 4.4 0 1 1 10.8 10.3L9.9 11.2H8.4V12.7H6.9V14.2L5.4 15.7H2.2V12.5L6.9 7.8A4.4 4.4 0 0 1 9.6 2.2Z" fill="none" stroke="#6b7380" stroke-width="1" stroke-linejoin="round"/><circle cx="12" cy="5.4" r="1.2" fill="none" stroke="#6b7380" stroke-width="1"/></svg>
<div class="a" style="left:71px;top:856px;width:16px;height:16px;border-radius:3px;background:linear-gradient(135deg,#b06dff,#5b35ff)">
<svg class="a" style="left:0;top:0" width="16" height="16" viewBox="0 0 36 36"><path d="M9.5 6H26.5Q27.6 6 28 7.2L30 13.5Q30.6 15.2 30 17Q29 20.5 25.8 20.5Q23 20.5 21.6 18.6Q20.2 20.5 18 20.5Q15.8 20.5 14.4 18.6Q13 20.5 10.2 20.5Q7 20.5 6 17Q5.4 15.2 6 13.5L8 7.2Q8.4 6 9.5 6Z" fill="#fff"/><path d="M10.2 12.6H25" stroke="#8f5cff" stroke-width="2.5"/><path d="M8 21.3Q10.5 22.6 12.8 21.8L14.4 20.8L16 21.8Q18 22.6 20 21.8L21.6 20.8L23.2 21.8Q25.6 22.6 28.5 21.3V27.6Q28.5 29.6 26.5 29.6H10Q8 29.6 8 27.6Z" fill="#fff"/></svg></div>

<!-- robot -->
<svg class="a" style="left:1708px;top:838px;z-index:5" width="59" height="54" viewBox="1708 838 59 54">
<defs>
<linearGradient id="rhead" x1="0" y1="0" x2="0.3" y2="1"><stop offset="0" stop-color="#eef6ff"/><stop offset="0.55" stop-color="#dce8fb"/><stop offset="1" stop-color="#a9b9ec"/></linearGradient>
<linearGradient id="rface" x1="0" y1="0" x2="0" y2="1"><stop offset="0" stop-color="#2b4684"/><stop offset="0.6" stop-color="#0f1a3a"/><stop offset="1" stop-color="#04060f"/></linearGradient>
<linearGradient id="rear" x1="0" y1="0" x2="0" y2="1"><stop offset="0" stop-color="#5fd6ff"/><stop offset="1" stop-color="#4a4fd8"/></linearGradient>
<radialGradient id="rsh" cx="0.5" cy="0.5" r="0.5"><stop offset="0" stop-color="#b4bccb" stop-opacity=".8"/><stop offset="1" stop-color="#b4bccb" stop-opacity="0"/></radialGradient>
</defs>
<ellipse cx="1737" cy="886.5" rx="15" ry="3" fill="url(#rsh)"/>
<path d="M1735 845.5Q1739 845 1741.5 844.5Q1742.5 842 1740 840.8Q1739.5 843 1735 845.5Z" fill="#3d9bff"/>
<path d="M1718.5 857Q1714.5 858.5 1714 863Q1714 868 1718 869.5Z" fill="url(#rear)"/>
<path d="M1757 857Q1761.5 858.5 1762 863Q1762 868 1758 869.5Z" fill="url(#rear)"/>
<path d="M1716.7 864Q1716.7 844.8 1737.9 844.8Q1759.1 844.8 1759.1 864Q1759.1 882.8 1737.9 882.8Q1716.7 882.8 1716.7 864Z" fill="url(#rhead)"/>
<path d="M1720.5 862Q1720.5 850.8 1738 850.8Q1755.3 850.8 1755.3 862Q1755.3 873.7 1738 873.7Q1720.5 873.7 1720.5 862Z" fill="url(#rface)"/>
<path d="M1729 873Q1742 873.5 1754 868" stroke="#7e3f7a" stroke-width="1" fill="none" opacity=".8"/>
<rect x="1727.7" y="861" width="5" height="9" rx="2.5" fill="#fff"/>
<rect x="1743.3" y="861" width="5" height="9" rx="2.5" fill="#fff"/>
</svg>
</body></html>
